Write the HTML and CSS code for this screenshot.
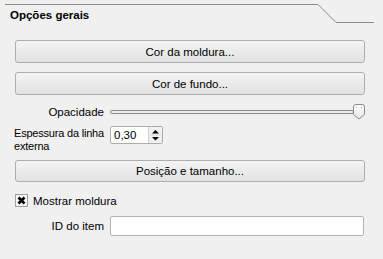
FILE: index.html
```html
<!DOCTYPE html>
<html lang="pt">
<head>
    <meta charset="UTF-8">
    <title>Opções gerais</title>
    <link rel="stylesheet" href="styles.css">
</head>
<body>
    <div class="head">
        <svg class="tab-line" width="383" height="30" viewBox="0 0 383 30">
            <path d="M5 4.5 H318 L336 22.5 H374" fill="none" stroke="#8c8c8c" stroke-width="1"/>
        </svg>
        <span class="title">Opções gerais</span>
    </div>
    <div class="content">
        <button class="btn">Cor da moldura...</button>
        <button class="btn">Cor de fundo...</button>

        <div class="row opacity-row">
            <label class="lbl">Opacidade</label>
            <div class="slider">
                <div class="groove"></div>
                <svg class="handle" width="12" height="16" viewBox="0 0 12 16">
                    <defs>
                        <linearGradient id="hg" x1="0" y1="0" x2="0" y2="1">
                            <stop offset="0" stop-color="#fdfdfd"/>
                            <stop offset="1" stop-color="#e6e6e6"/>
                        </linearGradient>
                    </defs>
                    <path d="M0.5 3 Q0.5 0.5 3 0.5 H9 Q11.5 0.5 11.5 3 V10.5 L6 15 L0.5 10.5 Z" fill="url(#hg)" stroke="#8a8a8a"/>
                    <rect x="3" y="3" width="1" height="1" fill="#b0b0b0"/>
                    <rect x="8" y="3" width="1" height="1" fill="#b0b0b0"/>
                </svg>
            </div>
        </div>

        <div class="row spin-row">
            <label class="lbl lbl-left">Espessura da linha<br>externa</label>
            <div class="spin">
                <span class="spin-value">0,30</span>
                <span class="spin-arrows">
                    <svg width="13" height="16" viewBox="0 0 13 16">
                        <path d="M3 6.5 H10 L6.5 3 Z" fill="#000"/>
                        <path d="M1 8 H12" stroke="#d6d6d6"/>
                        <path d="M3 10 H10 L6.5 13.5 Z" fill="#000"/>
                    </svg>
                </span>
            </div>
        </div>

        <button class="btn btn-pos">Posição e tamanho...</button>

        <div class="check-row">
            <svg class="check" width="13" height="13" viewBox="0 0 13 13">
                <rect x="0.5" y="0.5" width="12" height="12" fill="#f4f4f4" stroke="#a0a0a0"/>
                <path d="M3.5 3.5 L9.5 9.5 M9.5 3.5 L3.5 9.5" stroke="#000" stroke-width="2.6"/>
            </svg>
            <span>Mostrar moldura</span>
        </div>

        <div class="row id-row">
            <label class="lbl">ID do item</label>
            <input class="field" type="text" value="">
        </div>
    </div>
</body>
</html>
```

FILE: styles.css
```css
body {
    margin: 0;
    width: 383px;
    height: 259px;
    overflow: hidden;
    background: #f0f0f0;
    color: #000;
    font-family: "Liberation Sans", Arial, sans-serif;
    font-size: 11.5px;
}
.head {
    position: relative;
    height: 40px;
}
.tab-line {
    position: absolute;
    left: 0;
    top: 0;
}
.title {
    display: block;
    padding: 9px 0 0 10px;
    font-weight: bold;
}
.content {
    padding-left: 15px;
    width: 350px;
}
.btn {
    display: block;
    width: 350px;
    height: 23px;
    margin: 0 0 9px 0;
    padding: 0;
    border: 1px solid #adadad;
    border-radius: 3px;
    background: linear-gradient(#f4f4f4, #e2e2e2);
    font: inherit;
    color: #000;
}
.row {
    display: grid;
    grid-template-columns: 89px 1fr;
    column-gap: 6px;
    align-items: center;
}
.lbl {
    text-align: right;
}
.lbl-left {
    text-align: left;
    line-height: 13px;
    align-self: start;
    white-space: nowrap;
    margin-left: -1px;
    font-size: 11px;
    letter-spacing: -0.2px;
}
.opacity-row {
    margin-top: 1px;
    height: 16px;
}
.slider {
    position: relative;
    height: 16px;
}
.groove {
    position: absolute;
    left: 0;
    right: 11px;
    top: 6px;
    height: 2px;
    border: 1px solid #8d8d8d;
    border-radius: 2px;
    background: #e8e8e8;
}
.handle {
    position: absolute;
    right: 0;
    top: 0;
}
.spin-row {
    margin-top: 7px;
    height: 28px;
    align-items: start;
}
.spin {
    display: flex;
    width: 53px;
    height: 18px;
    box-sizing: border-box;
    border: 1px solid #acacac;
    border-radius: 2px;
    background: #fff;
    margin-top: -1px;
}
.spin-value {
    flex: 1;
    padding-left: 3px;
    line-height: 16px;
}
.spin-arrows {
    display: block;
    width: 13px;
    background: #f0f0f0;
    border-left: 1px solid #d0d0d0;
}
.spin-arrows svg {
    display: block;
}
.btn-pos {
    margin-top: 5px;
    height: 22px;
}
.check-row {
    display: flex;
    align-items: center;
    gap: 5px;
    margin-top: 12px;
    height: 13px;
}
.check {
    display: block;
}
.id-row {
    margin-top: 9px;
}
.field {
    width: 254px;
    height: 20px;
    box-sizing: border-box;
    border: 1px solid #b4b4b4;
    border-radius: 2px;
    background: #fff;
    margin: 0;
}
```
